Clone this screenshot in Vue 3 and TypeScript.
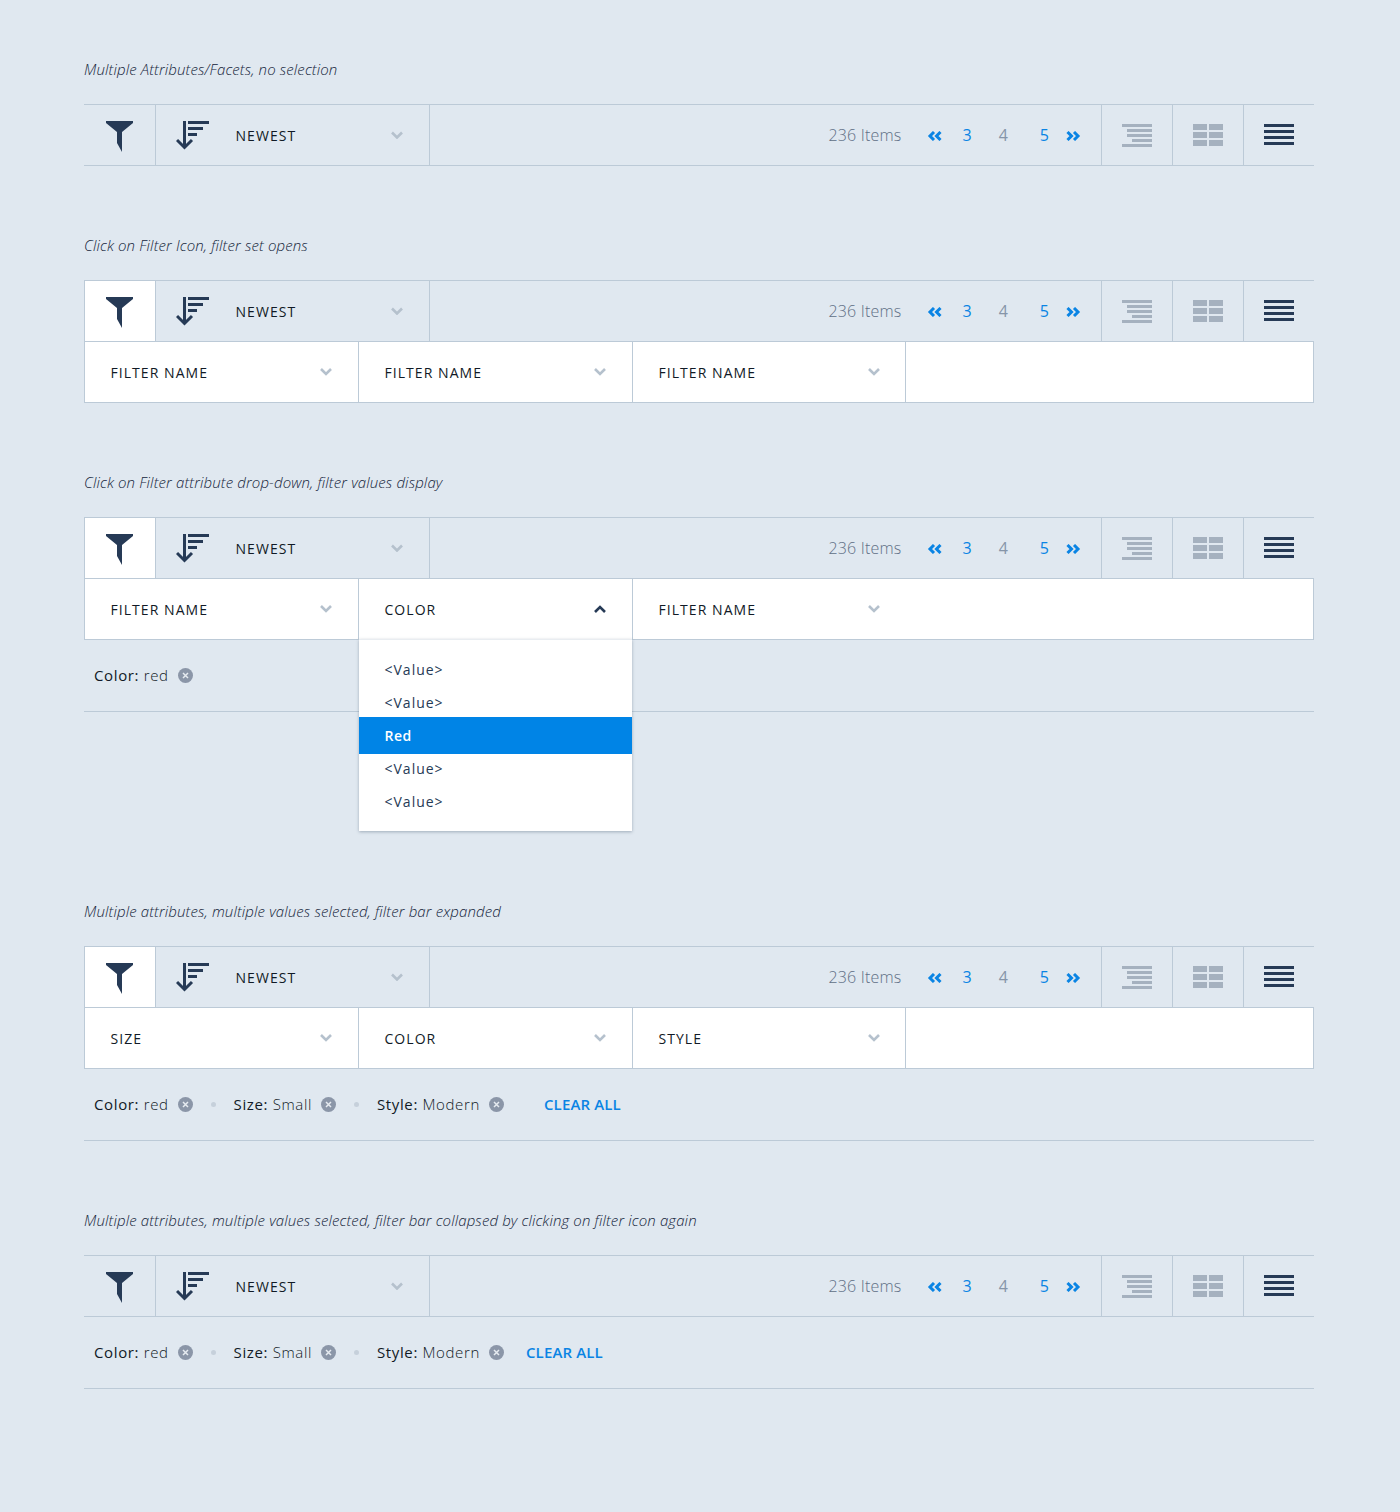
<script setup lang="ts">
interface Chip {
  name: string;
  value: string;
}

interface Section {
  label: string;
  filterActive: boolean;
  filters?: string[];
  openIndex?: number;
  chips?: Chip[];
  clearWide?: boolean;
  tall?: boolean;
}

const options = ['<Value>', '<Value>', 'Red', '<Value>', '<Value>'];

const allChips: Chip[] = [
  { name: 'Color', value: 'red' },
  { name: 'Size', value: 'Small' },
  { name: 'Style', value: 'Modern' },
];

const sections: Section[] = [
  { label: 'Multiple Attributes/Facets, no selection', filterActive: false },
  {
    label: 'Click on Filter Icon, filter set opens',
    filterActive: true,
    filters: ['FILTER NAME', 'FILTER NAME', 'FILTER NAME'],
  },
  {
    label: 'Click on Filter attribute drop-down, filter values display',
    filterActive: true,
    filters: ['FILTER NAME', 'COLOR', 'FILTER NAME'],
    openIndex: 1,
    chips: [allChips[0]],
    tall: true,
  },
  {
    label: 'Multiple attributes, multiple values selected, filter bar expanded',
    filterActive: true,
    filters: ['SIZE', 'COLOR', 'STYLE'],
    chips: allChips,
    clearWide: true,
  },
  {
    label: 'Multiple attributes, multiple values selected, filter bar collapsed by clicking on filter icon again',
    filterActive: false,
    chips: allChips,
  },
];
</script>

<template>
  <main class="page">
    <section v-for="section in sections" :key="section.label" class="block" :class="{ tall: section.tall }">
      <p class="caption">{{ section.label }}</p>

      <div class="toolbar">
        <button class="cell filter-cell" :class="{ active: section.filterActive }" aria-label="Filter">
          <svg width="27" height="31" viewBox="0 0 27 31">
            <path fill="#263a56" d="M0 0H27V2L16 11V31L11 22V11L0 2Z" />
          </svg>
        </button>

        <div class="cell sort-cell">
          <svg class="sort-icon" width="33" height="29" viewBox="0 0 33 29">
            <rect x="7" width="3" height="26" fill="#263a56" />
            <path d="M1 19L8.500 26.500L16 19" fill="none" stroke="#263a56" stroke-width="3" />
            <rect x="12" width="21" height="3" fill="#263a56" />
            <rect x="12" y="6" width="15" height="3" fill="#263a56" />
            <rect x="12" y="12" width="9" height="3" fill="#263a56" />
          </svg>
          <span class="caps">NEWEST</span>
          <svg class="chevron" width="12" height="8" viewBox="0 0 12 8">
            <path d="M1 1.500L6 6.500L11 1.500" fill="none" stroke="#b5c1cd" stroke-width="2.600" />
          </svg>
        </div>

        <div class="cell pager">
          <span class="count">236 Items</span>
          <svg class="prev" width="15" height="10" viewBox="0 0 15 10">
            <path d="M7 1L3 5L7 9M13.500 1L9.500 5L13.500 9" fill="none" stroke="#0a84e4" stroke-width="3" />
          </svg>
          <span class="page-num p3">3</span>
          <span class="page-num p4">4</span>
          <span class="page-num p5">5</span>
          <svg class="next" width="15" height="10" viewBox="0 0 15 10">
            <path d="M1.500 1L5.500 5L1.500 9M8 1L12 5L8 9" fill="none" stroke="#0a84e4" stroke-width="3" />
          </svg>
        </div>

        <div class="cell view-cell">
          <svg width="30" height="23" viewBox="0 0 30 23" fill="#a5b1bf">
            <rect width="30" height="3" />
            <rect x="5" y="5" width="25" height="3" />
            <rect x="5" y="10" width="25" height="3" />
            <rect x="10" y="15" width="20" height="3" />
            <rect y="20" width="30" height="3" />
          </svg>
        </div>
        <div class="cell view-cell">
          <svg width="30" height="22" viewBox="0 0 30 22" fill="#a5b1bf">
            <rect width="14" height="6" />
            <rect x="16" width="14" height="6" />
            <rect y="8" width="14" height="6" />
            <rect x="16" y="8" width="14" height="6" />
            <rect y="16" width="14" height="6" />
            <rect x="16" y="16" width="14" height="6" />
          </svg>
        </div>
        <div class="cell view-cell">
          <svg width="30" height="21" viewBox="0 0 30 21" fill="#263a56">
            <rect width="30" height="3" />
            <rect y="6" width="30" height="3" />
            <rect y="12" width="30" height="3" />
            <rect y="18" width="30" height="3" />
          </svg>
        </div>
      </div>

      <div v-if="section.filters" class="filters">
        <div
          v-for="(filter, i) in section.filters"
          :key="i"
          class="filter"
          :class="{ open: section.openIndex === i, plain: section.openIndex !== undefined && i === 2 }"
        >
          <span class="caps">{{ filter }}</span>
          <svg class="chevron" width="12" height="8" viewBox="0 0 12 8">
            <path
              v-if="section.openIndex === i"
              d="M1 7L6 2L11 7"
              fill="none"
              stroke="#263a56"
              stroke-width="2.600"
            />
            <path v-else d="M1 1L6 6L11 1" fill="none" stroke="#b5c1cd" stroke-width="2.600" />
          </svg>

          <ul v-if="section.openIndex === i" class="dropdown">
            <li v-for="(option, n) in options" :key="n" :class="{ selected: option === 'Red' }">{{ option }}</li>
          </ul>
        </div>
      </div>

      <div v-if="section.chips" class="chips">
        <template v-for="(chip, i) in section.chips" :key="chip.name">
          <span v-if="i > 0" class="dot"></span>
          <span class="chip">
            <span class="chip-text"><b>{{ chip.name }}:</b> {{ chip.value }}</span>
            <svg width="15" height="15" viewBox="0 0 15 15">
              <circle cx="7.500" cy="7.500" r="7.500" fill="#8b96a8" />
              <path d="M5 5L10 10M10 5L5 10" stroke="#e6ebf0" stroke-width="1.500" />
            </svg>
          </span>
        </template>
        <a v-if="section.chips.length > 1" class="clear" :class="{ wide: section.clearWide }">CLEAR ALL</a>
      </div>
    </section>
  </main>
</template>

<style>
body {
  background: #e0e8f0;
}
</style>

<style scoped>
.page {
  min-height: 1512px;
  box-sizing: border-box;
  padding: 60px 86px 0 84px;
  background: #e0e8f0;
  font-family: "Open Sans", sans-serif;
  color: #111a26;
}

.block {
  margin-bottom: 70px;
}

.block.tall {
  margin-bottom: 190px;
}

.caption {
  margin: 0 0 25px;
  font-size: 15px;
  font-weight: 300;
  line-height: 19px;
  letter-spacing: 0.13px;
  font-style: italic;
  color: #14243a;
}

/* --- Toolbar --- */
.toolbar {
  display: flex;
  height: 62px;
  box-sizing: border-box;
  border-top: 1px solid #bccad7;
  border-bottom: 1px solid #bccad7;
}

.cell {
  display: flex;
  align-items: center;
  box-sizing: border-box;
}

.filter-cell {
  width: 72px;
  align-items: flex-start;
  justify-content: center;
  padding: 16px 0 0;
  background: transparent;
  border: none;
  border-right: 1px solid #bccad7;
}

.filter-cell.active {
  background: #fff;
  box-shadow: inset 1px 0 0 #bccad7;
}

.sort-cell {
  width: 274px;
  padding: 0 26px 0 20px;
  border-right: 1px solid #bccad7;
}

.sort-icon {
  align-self: flex-start;
  margin-top: 16px;
  margin-right: 26.5px;
}

.caps {
  font-size: 14px;
  letter-spacing: 1.05px;
  color: #111a26;
}

.chevron {
  margin-left: auto;
}

.pager {
  flex: 1;
  justify-content: flex-end;
  padding-right: 20px;
}

.count {
  font-size: 16px;
  font-weight: 300;
  letter-spacing: 0.2px;
  color: #5f6f85;
  margin-right: 25px;
}

.page-num {
  font-size: 16px;
  color: #0a84e4;
}

.prev,
.next {
  margin-top: 2px;
}

.prev {
  margin-right: 21px;
}

.p3 {
  margin-right: 27px;
}

.p4 {
  color: #8695a8;
  margin-right: 32px;
}

.p5 {
  margin-right: 17px;
}

.view-cell {
  width: 71px;
  align-items: flex-start;
  justify-content: center;
  padding-top: 19px;
  border-left: 1px solid #bccad7;
}

/* --- Filter row --- */
.filters {
  display: flex;
  height: 61px;
  box-sizing: border-box;
  background: #fff;
  border: 1px solid #bccad7;
  border-top: none;
}

.filter {
  position: relative;
  display: flex;
  align-items: center;
  width: 274px;
  box-sizing: border-box;
  padding: 0 26px 0 25.5px;
  border-right: 1px solid #bccad7;
}

.filter:last-child {
  width: 273px;
  padding-right: 25px;
}

.filter.plain {
  border-right: none;
  padding-right: 26px;
}

.filter.open {
  z-index: 2;
}

.dropdown {
  position: absolute;
  top: 100%;
  left: 0;
  width: 273px;
  margin: 0;
  padding: 13px 0;
  list-style: none;
  background: #fff;
  border-top: 1px solid #e9edf1;
  box-shadow: 0 1px 3px rgba(40, 60, 85, 0.35);
}

.dropdown li {
  padding: 0 26px 0 25.5px;
  font-size: 14px;
  line-height: 33px;
  letter-spacing: 1px;
  color: #263a56;
}

.dropdown li.selected {
  margin: -2px 0;
  padding: 2px 26px 2px 25.5px;
  background: #0084e6;
  color: #fff;
  font-weight: 600;
  letter-spacing: 0.5px;
  position: relative;
}

/* --- Selected values --- */
.chips {
  display: flex;
  align-items: center;
  height: 72px;
  box-sizing: border-box;
  padding-left: 10px;
  border-bottom: 1px solid #bccad7;
}

.chip {
  display: flex;
  align-items: center;
  gap: 9px;
}

.chip-text {
  margin-bottom: 2px;
  font-size: 15px;
  font-weight: 300;
  letter-spacing: 0.63px;
}

.chip-text b {
  font-weight: 500;
}

.dot {
  width: 5px;
  height: 5px;
  margin: 0 18px;
  border-radius: 50%;
  background: #c6d0db;
}

.clear {
  margin-left: 22px;
  margin-bottom: 2px;
  font-size: 15px;
  font-weight: 600;
  letter-spacing: 0.15px;
  color: #0a84e4;
}

.clear.wide {
  margin-left: 40px;
}
</style>
